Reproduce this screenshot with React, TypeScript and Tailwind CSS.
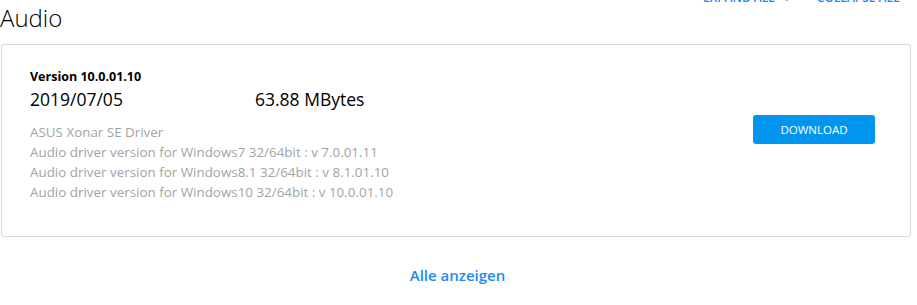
export default function App() {
  const notes = [
    'ASUS Xonar SE Driver',
    'Audio driver version for Windows7 32/64bit : v 7.0.01.11',
    'Audio driver version for Windows8.1 32/64bit : v 8.1.01.10',
    'Audio driver version for Windows10 32/64bit : v 10.0.01.10',
  ]

  return (
    <div className="w-[917px] h-[305px] overflow-hidden bg-white font-['Open_Sans',sans-serif]">
      {/* header, links half scrolled off the top */}
      <div className="relative h-[44px]">
        <div className="absolute left-[703px] top-[-11px] flex items-center text-[12px] font-semibold text-[#1a8cf0]">
          <span>EXPAND ALL</span>
          <span className="ml-[8px] text-[14px] leading-none">+</span>
          <span className="ml-[26px]">COLLAPSE ALL</span>
        </div>
        <h2 className="absolute left-0 top-[2px] text-[24px] leading-[32px] font-light text-black">Audio</h2>
      </div>

      <div className="mx-[1px] mr-[6px] h-[193px] rounded-[3px] border border-[#d9d9d9] flex items-start justify-between pl-[28px] pr-[35px] pt-[24px]">
        <div>
          <div className="text-[12.5px] leading-[16px] font-bold text-black">Version 10.0.01.10</div>
          <div className="mt-[3px] flex text-[17.5px] leading-[22px] text-black">
            <span className="w-[225px]">2019/07/05</span>
            <span>63.88 MBytes</span>
          </div>
          <div className="mt-[12px] text-[13.4px] leading-[20px] text-[#a3a3a3]">
            {notes.map((n) => (
              <div key={n}>{n}</div>
            ))}
          </div>
        </div>
        <button className="mt-[46px] w-[122px] h-[29px] rounded-[3px] bg-[#0096f0] text-white text-[11.5px]">
          DOWNLOAD
        </button>
      </div>

      <div className="mt-[27px] flex justify-center pr-[2px]">
        <a className="text-[15px] font-semibold text-[#1a8cf0]">Alle anzeigen</a>
      </div>
    </div>
  )
}
